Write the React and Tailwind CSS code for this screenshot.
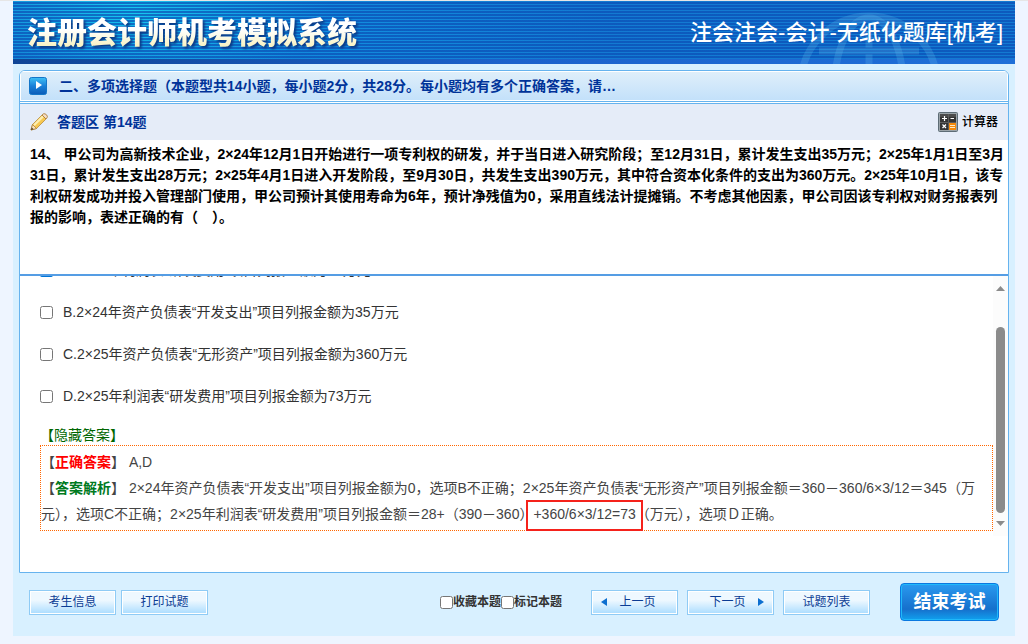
const options = [
  { id: "A", text: "A.2×24年利润表“研发费用”项目列报金额为28万元", checked: true },
  { id: "B", text: "B.2×24年资产负债表“开发支出”项目列报金额为35万元" },
  { id: "C", text: "C.2×25年资产负债表“无形资产”项目列报金额为360万元" },
  { id: "D", text: "D.2×25年利润表“研发费用”项目列报金额为73万元" },
];

function Header() {
  return (
    <header className="relative h-[63px] overflow-hidden bg-[#137ad2] bg-[radial-gradient(ellipse_200px_80px_at_120px_10px,#16c8f0,transparent),radial-gradient(ellipse_300px_80px_at_300px_30px,#1190e0,transparent)]">
      <div className="absolute inset-0 bg-[repeating-linear-gradient(to_bottom,transparent_0px,transparent_1px,#0a4cb4b0_1px,#0a4cb4b0_3px)]" />
      <div className="absolute inset-x-0 bottom-0 h-[5px] bg-linear-to-r from-[#0f4596] via-[#1b62cc] to-[#1f6fd8]" />
      <svg className="absolute top-0 right-[66px] h-[63px] w-40" viewBox="0 0 160 63" fill="none" stroke="#6cc4f0" strokeOpacity="0.22" strokeWidth="7">
        <circle cx="80" cy="83" r="68" />
        <ellipse cx="80" cy="83" rx="34" ry="66" />
        <path d="M80 30V63M30 50H130" />
      </svg>
      <div className="relative flex h-full items-center justify-between pr-3 pl-[14px]">
        <h1 className="bg-linear-to-b from-white from-40% to-[#f6efb0] bg-clip-text text-[30px] leading-[36px] font-black text-transparent drop-shadow-[2px_2px_1px_#0a3a86]">
          注册会计师机考模拟系统
        </h1>
        <div className="text-[22px] leading-[32px] font-medium text-white">注会注会-会计-无纸化题库[机考]</div>
      </div>
    </header>
  );
}

function PlayIcon() {
  return (
    <svg width="18" height="18" viewBox="0 0 18 18">
      <defs>
        <linearGradient id="play" x1="0" y1="0" x2="0" y2="1">
          <stop offset="0" stopColor="#3fc0f5" />
          <stop offset="0.5" stopColor="#1a80d8" />
          <stop offset="1" stopColor="#0a5cb8" />
        </linearGradient>
      </defs>
      <rect x="0.5" y="0.5" width="17" height="17" rx="2" fill="url(#play)" stroke="#1476c8" />
      <path d="M7 4L13 8L7 12Z" fill="#fff" />
    </svg>
  );
}

function PencilIcon() {
  return (
    <svg width="18" height="18" viewBox="0 0 18 18">
      <path d="M1 17L2.5 11.5L12 2L16 6L6.5 15.5Z" fill="#f6c750" stroke="#b88a3c" strokeWidth="0.8" />
      <path d="M4 12.2L13 3.4" stroke="#fdeeb0" strokeWidth="2.2" />
      <path d="M12 2L13.5 0.8Q15 0.3 16.5 1.8T17 4.8L16 6Z" fill="#f3dcc4" stroke="#a8742a" strokeWidth="0.8" />
      <path d="M2.5 11.5L6.5 15.5L1 17Z" fill="#f7e3bd" stroke="#a8742a" strokeWidth="0.7" />
      <path d="M1 17L1.8 14.5L3.6 16.2Z" fill="#4a3a2a" />
    </svg>
  );
}

function CalculatorIcon() {
  return (
    <svg width="20" height="20" viewBox="0 0 20 20">
      <rect x="0.5" y="0.5" width="19" height="19" rx="1" fill="#9aa3a8" stroke="#5d6c76" />
      <rect x="2" y="2" width="16" height="16" fill="#343434" />
      <rect x="2" y="2" width="16" height="3" fill="#4c4c4c" />
      <rect x="11" y="11" width="7" height="7" fill="#f58a0c" />
      <path d="M10.5 2V18M2 10.5H18" stroke="#5c5c5c" />
      <path d="M4 6.5H9M6.5 4V9M12.5 6.5H16" stroke="#fff" strokeWidth="1.2" />
      <path d="M4.5 12.5L8 16M8 12.5L4.5 16" stroke="#fff" strokeWidth="1.2" />
      <path d="M12 13.5H17M12 15.5H17" stroke="#ffe9c4" />
    </svg>
  );
}

function SmallButton({ children }) {
  return (
    <button
      type="button"
      className="flex h-[25px] w-[87px] items-center justify-center border border-[#8fcbf5] bg-linear-to-b from-[#eef8ff] from-40% to-[#a9dcff] text-xs text-[#0b3c94] shadow-[inset_0_0_0_1px_#fff]"
    >
      {children}
    </button>
  );
}

function Option({ option }) {
  return (
    <label className="flex h-[42px] shrink-0 items-center gap-[10px]">
      <input type="checkbox" defaultChecked={option.checked} className="size-[13px] accent-[#0075d8]" />
      <span>{option.text}</span>
    </label>
  );
}

function Answer() {
  return (
    <div className="shrink-0 border border-dotted border-[#ff6600] py-[3px] leading-[26px] text-[#444]">
      <p>
        【<b className="text-[#ff0000]">正确答案</b>】 A,D
      </p>
      <p>
        【<b className="text-[#007a1e]">答案解析</b>】 2×24年资产负债表“开发支出”项目列报金额为0，选项B不正确；2×25年资产负债表“无形资产”项目列报金额＝360－360/6×3/12＝345（万元），选项C不正确；2×25年利润表“研发费用”项目列报金额＝28+（390－360）
        <span className="relative">
          +360/6×3/12=73
          <span className="absolute -inset-x-[7px] -top-[6px] -bottom-[9px] border-2 border-[#f5221b]" />
        </span>
        （万元），选项Ｄ正确。
      </p>
    </div>
  );
}

function Scrollbar() {
  return (
    <div className="flex w-[15px] shrink-0 flex-col items-center bg-[#fcfcfc] pt-[10px] pb-[10px]">
      <svg width="9" height="5" viewBox="0 0 9 5">
        <path d="M0 5L4.5 0L9 5Z" fill="#8b8b8b" />
      </svg>
      <div className="mt-9 mb-2 w-[9px] flex-1 rounded-full bg-[#8b8b8b]" />
      <svg width="9" height="5" viewBox="0 0 9 5">
        <path d="M0 0H9L4.5 5Z" fill="#8b8b8b" />
      </svg>
    </div>
  );
}

function Footer() {
  return (
    <footer className="flex items-center pt-[10px] pr-4 pb-[15px] pl-4">
      <div className="flex gap-[5px]">
        <SmallButton>考生信息</SmallButton>
        <SmallButton>打印试题</SmallButton>
      </div>
      <div className="ml-auto flex items-center text-xs font-bold text-[#333]">
        <label className="flex items-center">
          <input type="checkbox" className="size-[13px]" />
          收藏本题
        </label>
        <label className="flex items-center">
          <input type="checkbox" className="size-[13px]" />
          标记本题
        </label>
      </div>
      <div className="ml-[29px] flex gap-[9px]">
        <SmallButton>
          <svg className="mr-3 -ml-3" width="6" height="8" viewBox="0 0 6 8">
            <path d="M6 0V8L0 4Z" fill="#0d6fd0" />
          </svg>
          上一页
        </SmallButton>
        <SmallButton>
          下一页
          <svg className="-mr-3 ml-3" width="6" height="8" viewBox="0 0 6 8">
            <path d="M0 0V8L6 4Z" fill="#0d6fd0" />
          </svg>
        </SmallButton>
        <SmallButton>试题列表</SmallButton>
      </div>
      <button
        type="button"
        className="ml-[30px] h-[38px] w-[99px] rounded-sm border border-[#0a78e0] bg-linear-to-b from-[#2a9af0] via-[#1670cc] via-70% to-[#10a0ee] text-lg leading-none font-bold text-white shadow-[inset_0_0_0_1px_#1fb8fa]"
      >
        结束考试
      </button>
    </footer>
  );
}

export default function App() {
  return (
    <div className="min-h-screen border-t border-[#e6e6e6] bg-[#eef5ff] font-['Liberation_Sans','Noto_Sans_CJK_SC',sans-serif] text-sm text-[#333]">
      <div className="mx-[13px] bg-[#d8f0ff]">
        <Header />
        <main className="mx-[6px] mt-[6px] overflow-hidden rounded-t-md border border-[#66b3ee] bg-white">
          <div className="flex h-[31px] items-center gap-3 border-b border-[#66b3ee] bg-linear-to-b from-[#e0effa] to-[#c2e0fa] pl-[9px] shadow-[inset_0_0_0_1px_#fff]">
            <PlayIcon />
            <h2 className="font-bold text-[#003399]">
              二、多项选择题（本题型共14小题，每小题2分，共28分。每小题均有多个正确答案，请…
            </h2>
          </div>
          <div className="mt-px flex h-[37px] items-center border-t border-[#66b3ee] bg-[#e5ecf8] pr-[10px] pl-[10px]">
            <PencilIcon />
            <h3 className="ml-[9px] font-bold text-[#003399]">答题区 第14题</h3>
            <button type="button" className="ml-auto flex items-center gap-1 text-xs font-medium text-black">
              <CalculatorIcon />
              计算器
            </button>
          </div>
          <div className="h-[136px] border-b-2 border-[#559de4] py-1 pr-1 pl-[10px] leading-[21px] font-bold text-black">
            14、 甲公司为高新技术企业，2×24年12月1日开始进行一项专利权的研发，并于当日进入研究阶段；至12月31日，累计发生支出35万元；2×25年1月1日至3月31日，累计发生支出28万元；2×25年4月1日进入开发阶段，至9月30日，共发生支出390万元，其中符合资本化条件的支出为360万元。2×25年10月1日，该专利权研发成功并投入管理部门使用，甲公司预计其使用寿命为6年，预计净残值为0，采用直线法计提摊销。不考虑其他因素，甲公司因该专利权对财务报表列报的影响，表述正确的有（　）。
          </div>
          <div className="mb-9 flex h-[260px]">
            <div className="flex min-w-0 flex-1 flex-col justify-end overflow-hidden pb-[5px] pl-5">
              {options.map((option) => (
                <Option key={option.id} option={option} />
              ))}
              <a href="#answer" className="mt-2 h-5 shrink-0 leading-5 text-[#006600]">
                【隐藏答案】
              </a>
              <Answer />
            </div>
            <Scrollbar />
          </div>
        </main>
        <Footer />
      </div>
    </div>
  );
}
